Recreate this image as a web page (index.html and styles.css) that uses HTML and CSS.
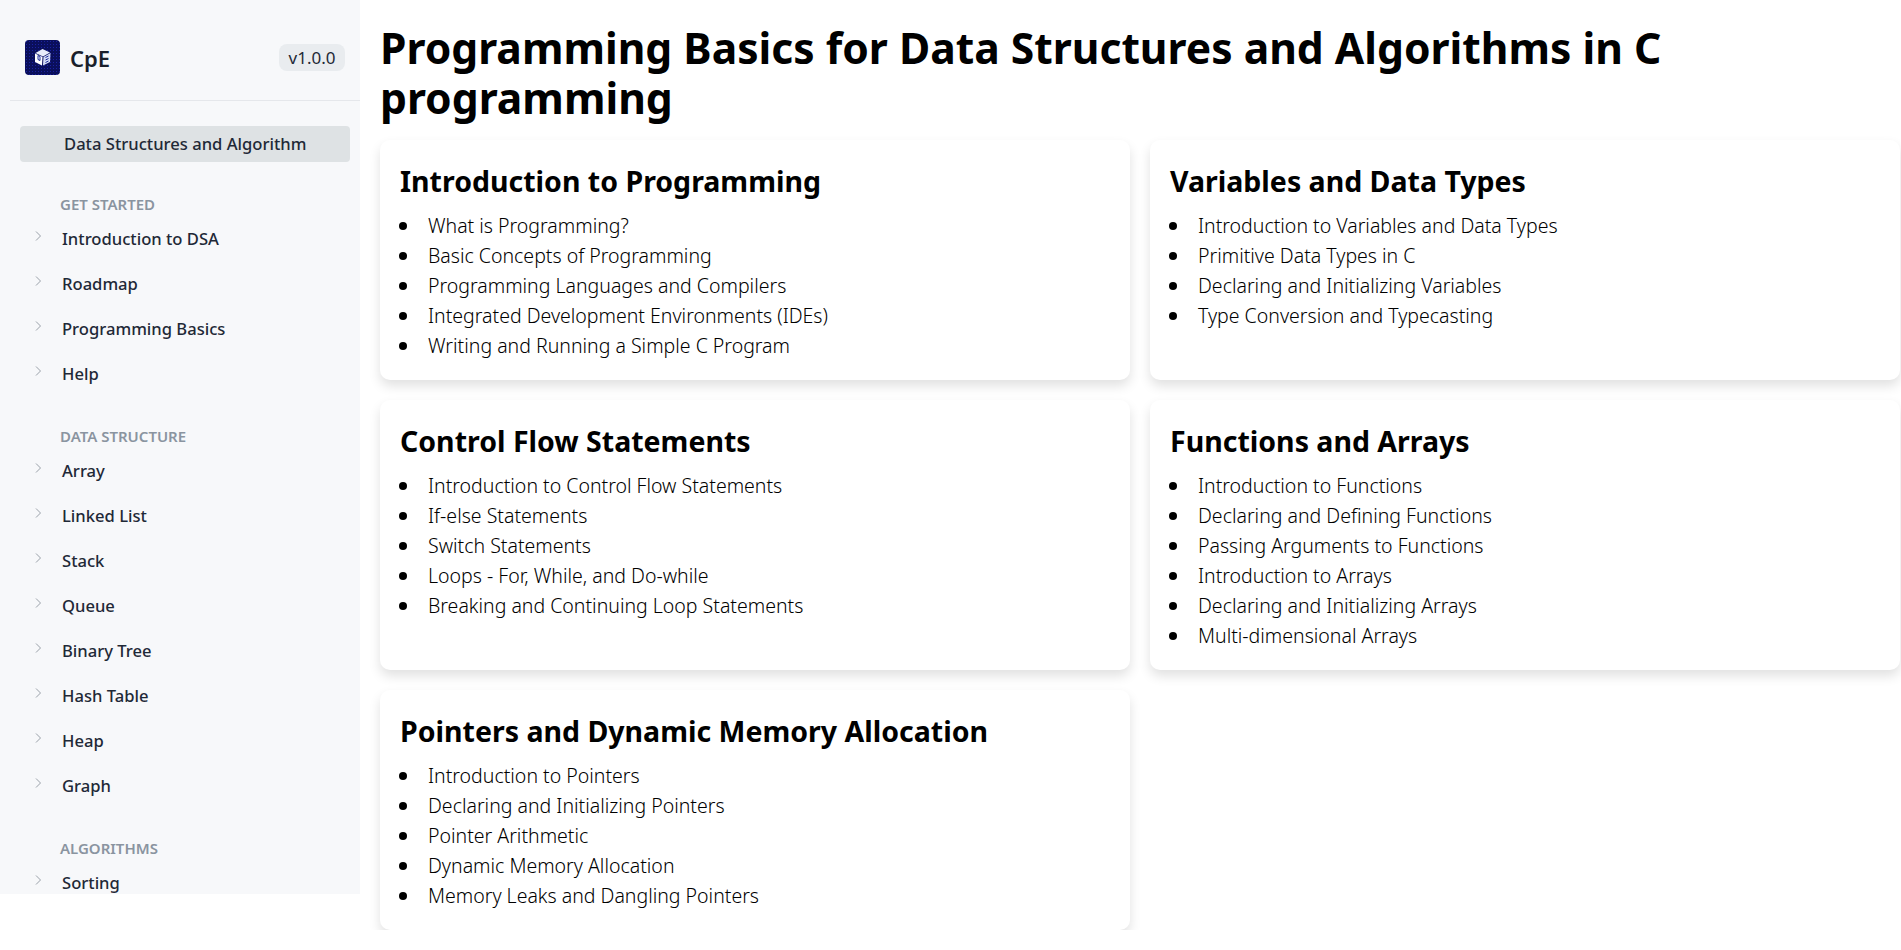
FILE: index.html
```html
<!DOCTYPE html>
<html lang="en">
<head>
    <meta charset="UTF-8">
    <meta name="viewport" content="width=device-width, initial-scale=1.0">
    <title>Programming Basics - CpE</title>
    <link rel="stylesheet" href="styles.css">
</head>
<body>
    <aside class="sidebar">
        <div class="brand">
            <div class="logo">
                <svg viewBox="0 0 35 35" width="35" height="35">
                    <polygon points="17.5,9 25,12.5 18,16.5 10.5,13" fill="#e8ecfa"/>
                    <polygon points="10,13.5 17.5,17 17,25.5 10,22" fill="#ffffff"/>
                    <polygon points="18.5,17 25.5,13 25,22 18,25.5" fill="#d5dcf5"/>
                    <path d="M13 15.5v4l2 1v-4zM20.5 17.5l3-1.5M20.5 20l3-1.5M20.5 22.5l3-1.5" stroke="#1b2a9a" stroke-width="1" fill="none"/>
                </svg>
            </div>
            <span class="brand-name">CpE</span>
            <span class="version">v1.0.0</span>
        </div>
        <div class="menu">
            <div class="active-item">Data Structures and Algorithm</div>

            <div class="section">
                <div class="section-title">GET STARTED</div>
                <div class="item"><svg class="chevron" viewBox="0 0 12 12"><path d="M4 1.5 8.5 6 4 10.5"/></svg>Introduction to DSA</div>
                <div class="item"><svg class="chevron" viewBox="0 0 12 12"><path d="M4 1.5 8.5 6 4 10.5"/></svg>Roadmap</div>
                <div class="item"><svg class="chevron" viewBox="0 0 12 12"><path d="M4 1.5 8.5 6 4 10.5"/></svg>Programming Basics</div>
                <div class="item"><svg class="chevron" viewBox="0 0 12 12"><path d="M4 1.5 8.5 6 4 10.5"/></svg>Help</div>
            </div>

            <div class="section">
                <div class="section-title">DATA STRUCTURE</div>
                <div class="item"><svg class="chevron" viewBox="0 0 12 12"><path d="M4 1.5 8.5 6 4 10.5"/></svg>Array</div>
                <div class="item"><svg class="chevron" viewBox="0 0 12 12"><path d="M4 1.5 8.5 6 4 10.5"/></svg>Linked List</div>
                <div class="item"><svg class="chevron" viewBox="0 0 12 12"><path d="M4 1.5 8.5 6 4 10.5"/></svg>Stack</div>
                <div class="item"><svg class="chevron" viewBox="0 0 12 12"><path d="M4 1.5 8.5 6 4 10.5"/></svg>Queue</div>
                <div class="item"><svg class="chevron" viewBox="0 0 12 12"><path d="M4 1.5 8.5 6 4 10.5"/></svg>Binary Tree</div>
                <div class="item"><svg class="chevron" viewBox="0 0 12 12"><path d="M4 1.5 8.5 6 4 10.5"/></svg>Hash Table</div>
                <div class="item"><svg class="chevron" viewBox="0 0 12 12"><path d="M4 1.5 8.5 6 4 10.5"/></svg>Heap</div>
                <div class="item"><svg class="chevron" viewBox="0 0 12 12"><path d="M4 1.5 8.5 6 4 10.5"/></svg>Graph</div>
            </div>

            <div class="section">
                <div class="section-title">ALGORITHMS</div>
                <div class="item"><svg class="chevron" viewBox="0 0 12 12"><path d="M4 1.5 8.5 6 4 10.5"/></svg>Sorting</div>
            </div>
        </div>
    </aside>

    <main class="content">
        <h1>Programming Basics for Data Structures and Algorithms in C programming</h1>
        <div class="cards">
            <section class="card">
                <h2>Introduction to Programming</h2>
                <ul>
                    <li>What is Programming?</li>
                    <li>Basic Concepts of Programming</li>
                    <li>Programming Languages and Compilers</li>
                    <li>Integrated Development Environments (IDEs)</li>
                    <li>Writing and Running a Simple C Program</li>
                </ul>
            </section>
            <section class="card">
                <h2>Variables and Data Types</h2>
                <ul>
                    <li>Introduction to Variables and Data Types</li>
                    <li>Primitive Data Types in C</li>
                    <li>Declaring and Initializing Variables</li>
                    <li>Type Conversion and Typecasting</li>
                </ul>
            </section>
            <section class="card">
                <h2>Control Flow Statements</h2>
                <ul>
                    <li>Introduction to Control Flow Statements</li>
                    <li>If-else Statements</li>
                    <li>Switch Statements</li>
                    <li>Loops - For, While, and Do-while</li>
                    <li>Breaking and Continuing Loop Statements</li>
                </ul>
            </section>
            <section class="card">
                <h2>Functions and Arrays</h2>
                <ul>
                    <li>Introduction to Functions</li>
                    <li>Declaring and Defining Functions</li>
                    <li>Passing Arguments to Functions</li>
                    <li>Introduction to Arrays</li>
                    <li>Declaring and Initializing Arrays</li>
                    <li>Multi-dimensional Arrays</li>
                </ul>
            </section>
            <section class="card">
                <h2>Pointers and Dynamic Memory Allocation</h2>
                <ul>
                    <li>Introduction to Pointers</li>
                    <li>Declaring and Initializing Pointers</li>
                    <li>Pointer Arithmetic</li>
                    <li>Dynamic Memory Allocation</li>
                    <li>Memory Leaks and Dangling Pointers</li>
                </ul>
            </section>
        </div>
    </main>
</body>
</html>
```

FILE: styles.css
```css
body {
    margin: 0;
    display: flex;
    align-items: flex-start;
    font-family: "Noto Sans", sans-serif;
    background-color: #ffffff;
    color: #000000;
}

/* Sidebar */
.sidebar {
    flex: 0 0 360px;
    height: 894px;
    overflow: hidden;
    background-color: #f7f8fa;
    color: #1f2937;
}

.brand {
    display: flex;
    align-items: center;
    box-sizing: border-box;
    height: 101px;
    margin-left: 10px;
    padding: 15px 15px 0;
    border-bottom: 1px solid #e5e7eb;
}

.logo {
    width: 35px;
    height: 35px;
    border-radius: 4px;
    background-color: #0a0f5c;
    background-image: radial-gradient(#1a22a0 1px, transparent 1px);
    background-size: 3px 3px;
}

.brand-name {
    margin-left: 10px;
    font-size: 22px;
    font-weight: 600;
    color: #1a1f2b;
}

.version {
    margin-left: auto;
    padding: 0 9.5px;
    height: 27px;
    line-height: 27px;
    border-radius: 8px;
    background-color: #e9ecef;
    font-size: 17px;
}

.menu {
    padding: 25px 10px 0 20px;
}

.active-item {
    height: 36px;
    line-height: 36px;
    padding-left: 44px;
    border-radius: 4px;
    background-color: #dee2e4;
    font-size: 16.6px;
    font-weight: 500;
}

.section {
    margin-top: 29.5px;
}

.section + .section {
    margin-top: 28px;
}

.section-title {
    padding-left: 40px;
    height: 24px;
    line-height: 24px;
    font-size: 15px;
    font-weight: 600;
    color: #8a94a0;
}

.item {
    display: flex;
    align-items: center;
    height: 45px;
    font-size: 16.6px;
    font-weight: 500;
}

.chevron {
    width: 12px;
    height: 12px;
    margin: -4px 18px 0 12px;
    fill: none;
    stroke: #9aa1a9;
    stroke-width: 1;
}

/* Main content */
.content {
    flex: 1;
    padding: 0 1px 0 20px;
}

h1 {
    margin: 22px 0 0;
    font-size: 42.6px;
    line-height: 50px;
    font-weight: 700;
}

.cards {
    display: grid;
    grid-template-columns: 1fr 1fr;
    gap: 20px;
    margin-top: 18px;
}

.card {
    padding: 20px 20px 19px;
    border-radius: 10px;
    box-shadow: 0 6px 12px rgba(0, 0, 0, 0.12);
}

h2 {
    margin: 0 0 8px;
    font-size: 28.5px;
    line-height: 43px;
    font-weight: 700;
}

ul {
    margin: 0;
    padding: 0;
    list-style: none;
}

li {
    display: flex;
    align-items: center;
    font-size: 19.5px;
    font-weight: 350;
    line-height: 30px;
}

li::before {
    content: "";
    flex: none;
    width: 8px;
    height: 8px;
    margin: 0 21px 0 -1px;
    border-radius: 50%;
    background-color: #000000;
}
```
